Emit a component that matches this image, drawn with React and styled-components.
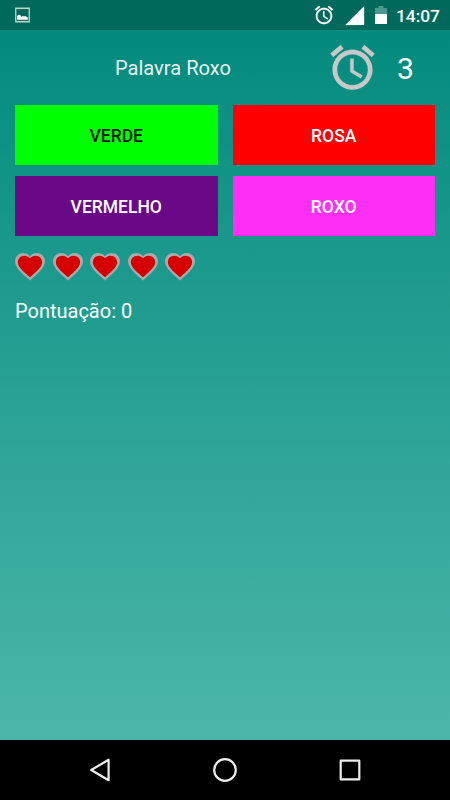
import React, { useState } from "react";
import styled, { createGlobalStyle } from "styled-components";

const GlobalStyle = createGlobalStyle`
  body {
    margin: 0;
    background: #000;
    font-family: Roboto, "Liberation Sans", sans-serif;
  }
`;

const answers = [
  { label: "VERDE", background: "#00ff00", color: "#0a1a0a" },
  { label: "ROSA", background: "#ff0000", color: "#fff" },
  { label: "VERMELHO", background: "#6a0888", color: "#fff" },
  { label: "ROXO", background: "#ff2ef7", color: "#fff" },
];

const Screen = styled.div`
  width: 450px;
  height: 800px;
  display: flex;
  flex-direction: column;
  overflow: hidden;
  background: linear-gradient(#00897b, #4db6ac 740px);
`;

const StatusBar = styled.header`
  height: 30px;
  flex: none;
  display: flex;
  align-items: center;
  box-sizing: border-box;
  padding: 0 10px 0 15px;
  background: #00695c;
  svg {
    display: block;
    flex: none;
  }
`;

const StatusIcons = styled.div`
  margin-left: auto;
  display: flex;
  align-items: center;
`;

const Signal = styled.svg`
  margin-left: 10px;
`;

const Battery = styled.svg`
  margin-left: 10px;
`;

const Clock = styled.span`
  margin-left: 9px;
  padding-top: 2px;
  font-size: 17.4px;
  font-weight: 500;
  line-height: 28px;
  color: #fff;
`;

const Game = styled.main`
  flex: 1;
  padding: 0 15px;
`;

const TopRow = styled.div`
  height: 75px;
  display: flex;
  align-items: center;
  color: #fff;
`;

const Word = styled.div`
  width: 316px;
  text-align: center;
  font-size: 20.1px;
  line-height: 24px;
  color: rgba(255, 255, 255, 0.93);
`;

const Timer = styled.div`
  display: flex;
  align-items: center;
  margin-left: -5px;
  svg {
    display: block;
  }
`;

const Seconds = styled.span`
  margin-left: 18px;
  padding-top: 2px;
  font-size: 30px;
  line-height: 36px;
`;

const Answers = styled.div`
  display: grid;
  grid-template-columns: 1fr 1fr;
  grid-auto-rows: 60px;
  column-gap: 15px;
  row-gap: 11px;
`;

const Answer = styled.button`
  border: 0;
  border-radius: 0;
  padding: 2px 0 0;
  font-family: inherit;
  font-size: 17.5px;
  font-weight: 500;
  background: ${(props) => props.$background};
  color: ${(props) => props.$color};
`;

const Lives = styled.div`
  display: flex;
  gap: 7.5px;
  margin-top: 17px;
  height: 28px;
`;

const Score = styled.div`
  margin-top: 18px;
  font-size: 20px;
  line-height: 24px;
  color: #fff;
`;

const NavBar = styled.nav`
  height: 60px;
  flex: none;
  display: flex;
  align-items: center;
  justify-content: space-between;
  box-sizing: border-box;
  padding: 0 85px;
  background: #000;
  svg {
    display: block;
    fill: none;
    stroke: #eee;
    stroke-width: 2.2;
    stroke-linejoin: round;
  }
`;

const HEART =
  "M12 21.35l-1.45-1.32C5.4 15.36 2 12.28 2 8.5 2 5.42 4.42 3 7.5 3c1.74 0 3.41.81 4.5 2.09C13.09 3.81 14.76 3 16.5 3 19.58 3 22 5.42 22 8.5c0 3.78-3.4 6.86-8.55 11.54L12 21.35z";

const AlarmIcon = ({ size, color, weight = 0 }) => (
  <svg
    width={size}
    height={size}
    viewBox="0 0 24 24"
    fill={color}
    stroke={color}
    strokeWidth={weight}
  >
    <path d="M22 5.72l-4.6-3.86-1.29 1.53 4.6 3.86L22 5.72zM7.88 3.39L6.6 1.86 2 5.71l1.29 1.53 4.59-3.85zM12.5 8H11v6l4.75 2.85.75-1.23-4-2.37V8zM12 4c-4.97 0-9 4.03-9 9s4.02 9 9 9c4.97 0 9-4.03 9-9s-4.03-9-9-9zm0 16c-3.87 0-7-3.13-7-7s3.13-7 7-7 7 3.13 7 7-3.13 7-7 7z" />
  </svg>
);

const Heart = () => (
  <svg width="30" height="27.5" viewBox="2 3 20 18.35">
    <path d={HEART} fill="#aaa" />
    <path
      d={HEART}
      fill="#d50000"
      transform="translate(12 11.7) scale(0.81 0.78) translate(-12 -11.7)"
    />
  </svg>
);

const App = () => {
  const [lives] = useState(5);
  const [score] = useState(0);
  const [seconds] = useState(3);

  return (
    <Screen>
      <GlobalStyle />
      <StatusBar>
        <svg width="15" height="16" viewBox="0 0 15 16">
          <path d="M.75 1.25h13.5v13.5H.75z" fill="none" stroke="#b9d7d1" strokeWidth="1.3" />
          <path d="M2 12.8V9l1.6-1.3 1.6.3 1.5 2 1-.9 1.4.3 1-.5 2.7 1.7v2.2z" fill="#fff" />
        </svg>
        <StatusIcons>
          <AlarmIcon size={22} color="#fff" weight={0.15} />
          <Signal width="20" height="19" viewBox="0 0 20 19">
            <path d="M19.2 0v19H.3z" fill="#fff" />
          </Signal>
          <Battery width="12" height="18" viewBox="0 0 12 18">
            <path d="M3.5 0h5v2H12v6H0V2h3.5z" fill="#4d978d" />
            <path d="M0 8h12v10H0z" fill="#fff" />
          </Battery>
          <Clock>14:07</Clock>
        </StatusIcons>
      </StatusBar>
      <Game>
        <TopRow>
          <Word>Palavra Roxo</Word>
          <Timer>
            <AlarmIcon size={53} color="#c8c8c8" weight={0.15} />
            <Seconds>{seconds}</Seconds>
          </Timer>
        </TopRow>
        <Answers>
          {answers.map((answer) => (
            <Answer
              key={answer.label}
              $background={answer.background}
              $color={answer.color}
            >
              {answer.label}
            </Answer>
          ))}
        </Answers>
        <Lives>
          {Array.from({ length: lives }, (_, index) => (
            <Heart key={index} />
          ))}
        </Lives>
        <Score>Pontuação: {score}</Score>
      </Game>
      <NavBar>
        <svg width="30" height="30" viewBox="0 0 30 30">
          <path d="M23.6 4.8v20.4L6.2 15z" />
        </svg>
        <svg width="30" height="30" viewBox="0 0 30 30">
          <circle cx="15" cy="15" r="10.8" />
        </svg>
        <svg width="30" height="30" viewBox="0 0 30 30">
          <path d="M5.7 5.7h18.6v18.6H5.7z" />
        </svg>
      </NavBar>
    </Screen>
  );
};

export default App;
